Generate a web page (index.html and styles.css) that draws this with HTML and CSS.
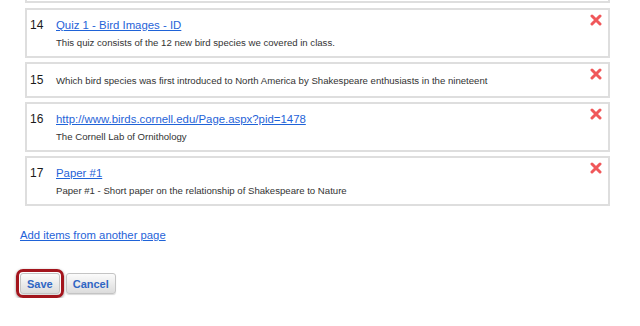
FILE: index.html
```html
<!DOCTYPE html>
<html>
<head>
<meta charset="utf-8">
<link rel="stylesheet" href="styles.css">
</head>
<body>
<div class="list">
  <div class="item partial"></div>
  <div class="item">
    <div class="num">14</div>
    <div class="body">
      <div class="title"><a href="#">Quiz 1 - Bird Images - ID</a></div>
      <div class="desc">This quiz consists of the 12 new bird species we covered in class.</div>
    </div>
    <svg class="del" width="12" height="12" viewBox="0 0 12 12"><path d="M2 2L10 10M10 2L2 10" stroke="#f0575a" stroke-width="3" stroke-linecap="round"/></svg>
  </div>
  <div class="item single">
    <div class="num">15</div>
    <div class="body">
      <div class="question">Which bird species was first introduced to North America by Shakespeare enthusiasts in the nineteent</div>
    </div>
    <svg class="del" width="12" height="12" viewBox="0 0 12 12"><path d="M2 2L10 10M10 2L2 10" stroke="#f0575a" stroke-width="3" stroke-linecap="round"/></svg>
  </div>
  <div class="item">
    <div class="num">16</div>
    <div class="body">
      <div class="title"><a href="#">http://www.birds.cornell.edu/Page.aspx?pid=1478</a></div>
      <div class="desc">The Cornell Lab of Ornithology</div>
    </div>
    <svg class="del" width="12" height="12" viewBox="0 0 12 12"><path d="M2 2L10 10M10 2L2 10" stroke="#f0575a" stroke-width="3" stroke-linecap="round"/></svg>
  </div>
  <div class="item">
    <div class="num">17</div>
    <div class="body">
      <div class="title"><a href="#">Paper #1</a></div>
      <div class="desc">Paper #1 - Short paper on the relationship of Shakespeare to Nature</div>
    </div>
    <svg class="del" width="12" height="12" viewBox="0 0 12 12"><path d="M2 2L10 10M10 2L2 10" stroke="#f0575a" stroke-width="3" stroke-linecap="round"/></svg>
  </div>
</div>
<div class="add"><a href="#">Add items from another page</a></div>
<div class="actions">
  <div class="ring"><button class="btn">Save</button></div>
  <button class="btn">Cancel</button>
</div>
</body>
</html>
```
FILE: styles.css
```css
body {
  margin: 0;
  font-family: "Liberation Sans", Arial, Helvetica, sans-serif;
  background: #fff;
}
.list {
  margin-left: 25px;
  width: 585px;
  display: flex;
  flex-direction: column;
  gap: 4px;
}
.item {
  border: 2px solid #dedede;
  display: flex;
  align-items: flex-start;
  padding: 8px 6px 6px 3px;
  min-height: 32px;
}
.item.single {
  min-height: 18px;
  padding-top: 9px;
  padding-bottom: 5px;
}
.item.partial {
  border-top: none;
  min-height: 0;
  height: 1px;
  padding: 0;
  margin-bottom: 1px;
}
.num {
  width: 26px;
  font-size: 12px;
  line-height: 15px;
  color: #1a1a1a;
}
.body {
  flex: 1;
}
.title {
  font-size: 11.4px;
  line-height: 15px;
}
.title a {
  color: #1f63d8;
  text-decoration: underline;
}
.desc {
  font-size: 9.6px;
  line-height: 13px;
  color: #333;
  margin-top: 3px;
}
.question {
  font-size: 9.6px;
  line-height: 15px;
  color: #333;
}
.del {
  margin-top: -4px;
}
.single .del {
  margin-top: -5px;
}
.add {
  margin: 22px 0 0 20px;
  font-size: 11.3px;
  line-height: 15px;
}
.add a {
  color: #1f63d8;
  text-decoration: underline;
}
.actions {
  display: flex;
  align-items: center;
  gap: 2px;
  margin: 26px 0 0 16px;
}
.ring {
  border: 3px solid #a3151d;
  border-radius: 7px;
  padding: 1px;
  box-shadow: 0 1px 3px rgba(0, 0, 0, 0.45);
  display: flex;
}
.btn {
  font-family: "Liberation Sans", Arial, sans-serif;
  font-weight: bold;
  font-size: 11px;
  color: #2f66c4;
  background: linear-gradient(#fbfbfb, #dcdcdc);
  border: 1px solid #c4c4c4;
  border-radius: 3px;
  padding: 3px 6px;
  height: 21px;
  box-shadow: 0 1px 1px rgba(0, 0, 0, 0.15);
}
```
